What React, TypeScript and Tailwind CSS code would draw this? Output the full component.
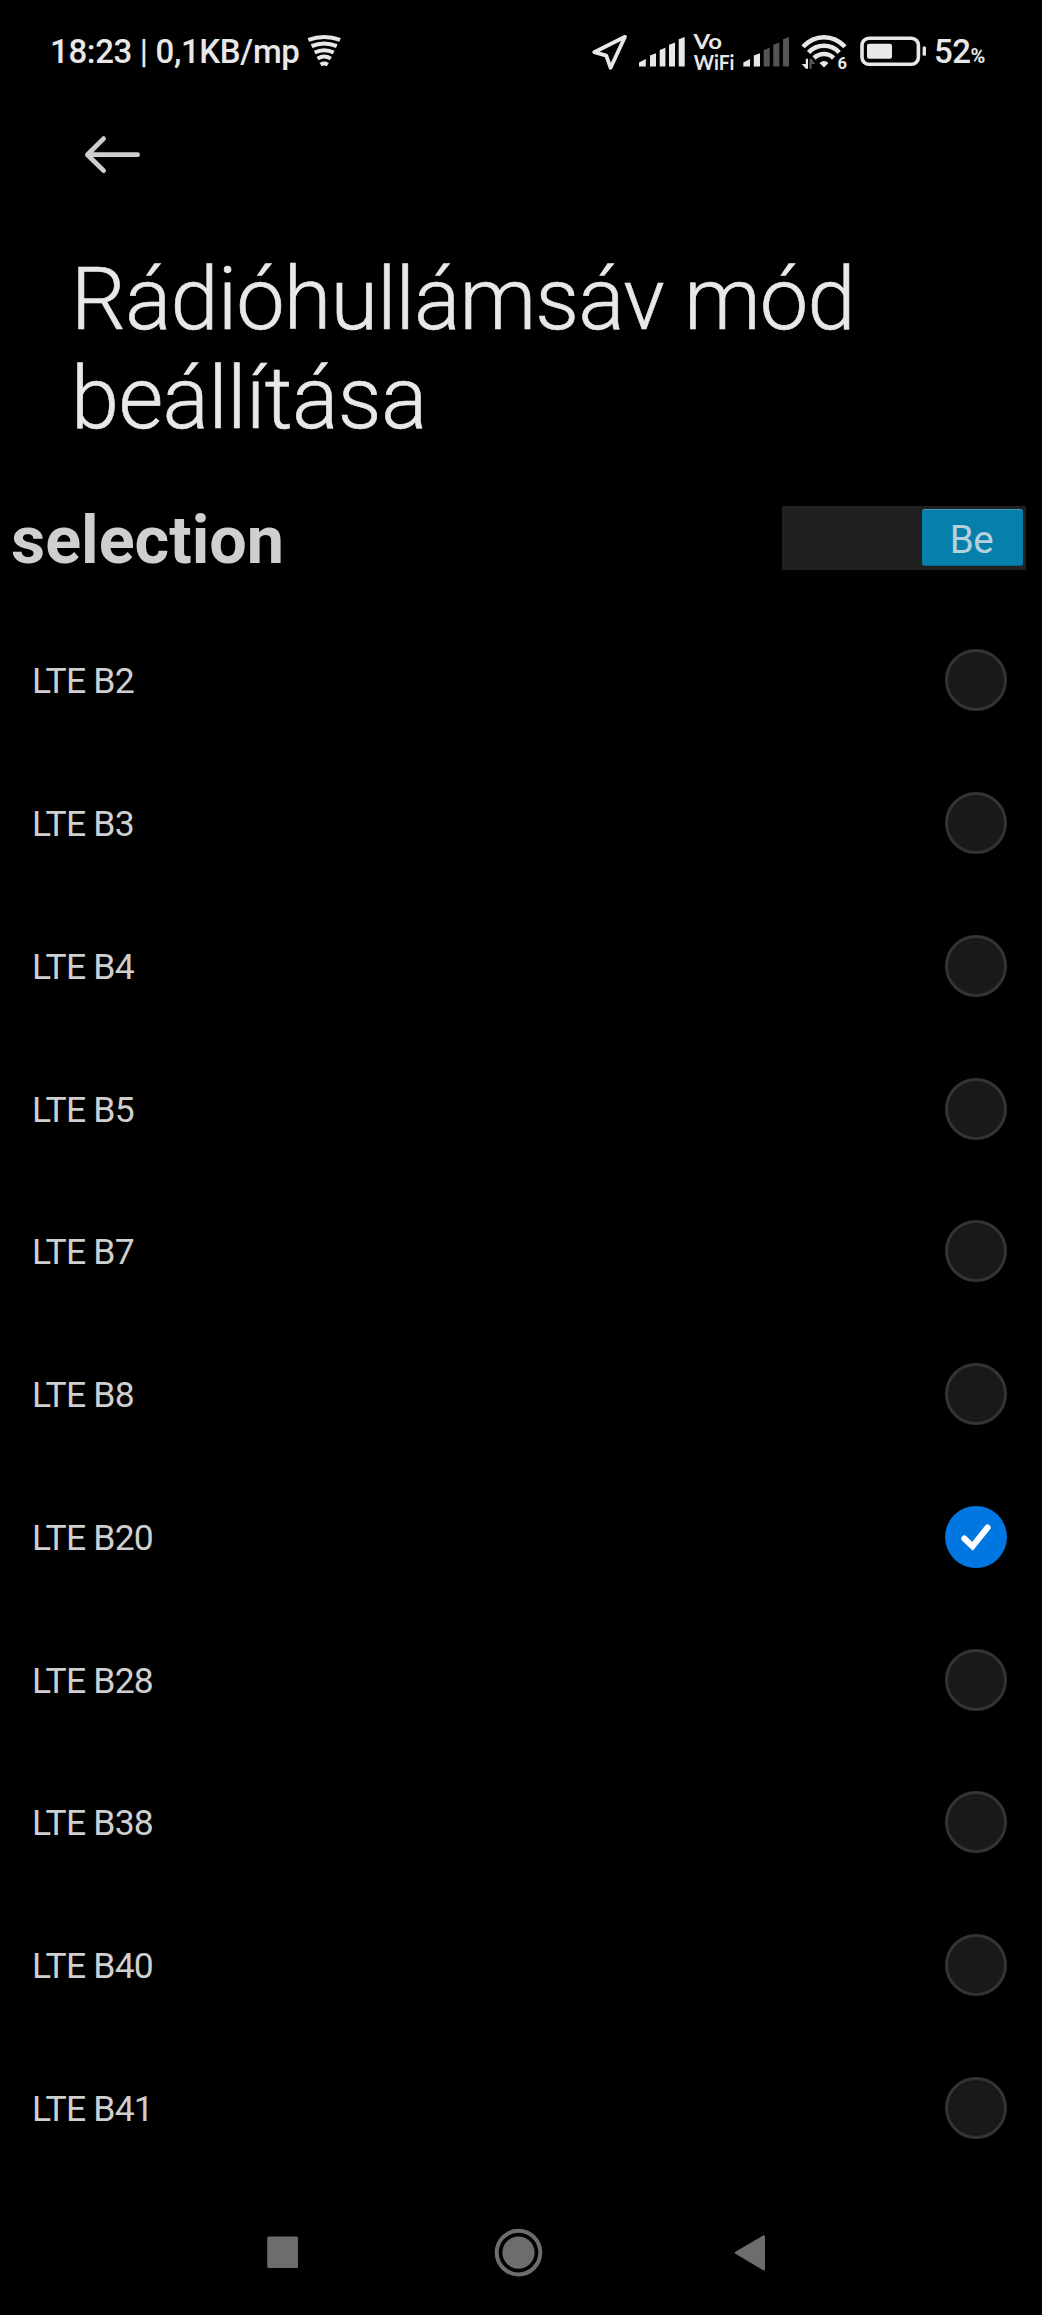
const bands = ['B2', 'B3', 'B4', 'B5', 'B7', 'B8', 'B20', 'B28', 'B38', 'B40', 'B41']

function StatusIcons() {
  return (
    <svg width="340" height="48" viewBox="590 26 340 48" fill="#e8e8e8">
      <path d="M625 35.8 594.2 51.2 606.3 54.6 610.6 66.8Z" fill="none" stroke="#e8e8e8" strokeWidth="3.8" strokeLinejoin="round" />

      {/* SIM 1 */}
      <path d="M639 61.5 645.8 58V65.4H639Z" />
      <path d="M650 54.5 656 52.2V65.4H650Z" />
      <path d="M659.7 49 665.4 46.7V65.4H659.7Z" />
      <path d="M669 43.8 675 41.5V65.4H669Z" />
      <path d="M678.7 38.2 684.7 36V65.4H678.7Z" />

      <text x="693.5" y="47.6" fontFamily="Lato" fontSize="21.5" fontWeight="700" textLength="28.5" lengthAdjust="spacingAndGlyphs">Vo</text>
      <text x="693.8" y="68.6" fontFamily="Lato" fontSize="21" fontWeight="700" textLength="40.7" lengthAdjust="spacingAndGlyphs">WiFi</text>

      {/* SIM 2 */}
      <path d="M743.3 61.5 750 58V65.4H743.3Z" />
      <path d="M753.8 54.5 760 52.2V65.4H753.8Z" />
      <g fill="#555">
        <path d="M763.7 49 769.7 46.7V65.4H763.7Z" />
        <path d="M773.3 43.8 779.3 41.5V65.4H773.3Z" />
        <path d="M783 38.2 789 36V65.4H783Z" />
      </g>

      {/* wifi */}
      <g fill="none" stroke="#e8e8e8" strokeWidth="4.6">
        <path d="M803 45.8Q812 36.2 824 36.2T845 45.8" />
        <path d="M808.6 51.5Q815 44.8 824 44.8T839.2 51.5" />
        <path d="M814 57Q818.4 53 824 53T833.6 57" />
      </g>
      <path d="M819.5 62Q824 57.8 828.5 62L824 66.5Z" />
      <path d="M805.8 57.8H808V67.8H805.8L801.8 63H805.8Z" />
      <path d="M809.4 57.8H811.6L815.2 63H811.6V67.8H809.4Z" fill="#555" />
      <text x="837.6" y="68" fontFamily="Roboto" fontSize="16.5" fontWeight="700">6</text>

      {/* battery */}
      <rect x="862" y="37.2" width="56.4" height="26" rx="7" fill="none" stroke="#e8e8e8" strokeWidth="3.6" />
      <rect x="867" y="42.7" width="25" height="15" rx="2" />
      <rect x="922.6" y="45.5" width="3.4" height="9.3" rx="1.2" />
    </svg>
  )
}

function SpeedIcon() {
  return (
    <svg width="34" height="34" viewBox="307 33 34 34" fill="none" stroke="#e8e8e8" strokeWidth="4">
      <path d="M308.3 38.8Q324.2 33.2 340.1 38.8" />
      <path d="M311.6 45.2Q324.2 39.8 336.8 45.2" />
      <path d="M314.7 51.5Q324.2 46.8 333.7 51.5" />
      <path d="M317.6 57.6Q324.2 53.4 330.8 57.6" />
      <path d="M320.6 63.6Q324.2 61.4 327.8 63.6" />
    </svg>
  )
}

function Radio({ checked }: { checked: boolean }) {
  if (!checked) {
    return <span className="size-[62px] rounded-full border-[3px] border-[#333] bg-[#191919]" />
  }
  return (
    <span className="flex size-[62px] items-center justify-center rounded-full bg-[#0076e1]">
      <svg width="62" height="62" viewBox="0 0 62 62" fill="none" stroke="#fff" strokeWidth="6" strokeLinecap="round" strokeLinejoin="miter">
        <path d="M19.3 32.5 27.5 40.3 42.6 21.5" />
      </svg>
    </span>
  )
}

export default function App() {
  return (
    <main className="flex h-[2315px] w-[1042px] flex-col overflow-hidden bg-black font-['Roboto',sans-serif] text-[#cfcfcf]">
      <header className="flex h-[102px] items-center pl-[50px] text-[33px] font-medium text-[#e8e8e8]">
        <span className="w-[257px] pt-[2px] whitespace-nowrap tracking-[-0.35px]">18:23 | 0,1KB/mp</span>
        <SpeedIcon />
        <span className="ml-[249px] mr-[4px]">
          <StatusIcons />
        </span>
        <span className="pt-[2px] whitespace-nowrap tracking-[-0.5px]">
          52<span className="text-[20px] font-bold">%</span>
        </span>
      </header>

      <button className="ml-[82px] mt-[30px] w-[62px]" aria-label="Vissza">
        <svg width="62" height="46" viewBox="82 132 62 46" fill="none" stroke="#cfcdcd" strokeWidth="4.8" strokeLinecap="round" strokeLinejoin="round">
          <path d="M137.6 154.7H87.6M103.6 138.6 87.4 154.7 103.6 170.6" />
        </svg>
      </button>

      <h1 className="mt-[72px] pl-[71px] text-[86.5px] leading-[99px] font-light tracking-[-0.9px] text-[#e8e8e8] [-webkit-text-stroke:0.6px_#e8e8e8]">
        Rádióhullámsáv mód
        <br />
        <span className="tracking-[-0.6px]">beállítása</span>
      </h1>

      <section className="mt-[58px] flex h-[64px] items-start justify-between pl-[11px] pr-[16px]">
        <h2 className="text-[66.5px] leading-[68px] font-bold">selection</h2>
        <div className="flex h-[64px] w-[244px] justify-end bg-[#202020] p-[3px]">
          <span className="flex h-[57px] w-[101px] items-center justify-center rounded-[3px] border-t border-b border-t-[#3f9abb] border-b-[#056a8b] bg-[#0680aa] pt-[4px] pr-[2px] text-[38.5px] tracking-[-0.5px] text-[#b5d0da]">
            Be
          </span>
        </div>
      </section>

      <ul className="mt-[39px]">
        {bands.map((band) => (
          <li key={band} className="flex h-[142.75px] items-center justify-between pl-[32px] pr-[35px] text-[35.5px]">
            <span className="mt-[3px] tracking-[-0.8px]">LTE {band}</span>
            <Radio checked={band === 'B20'} />
          </li>
        ))}
      </ul>

      <nav className="mt-[43px] flex pl-[260px]">
        <svg width="520" height="60" viewBox="260 2222 520 60" fill="#6d6d6d">
          <rect x="267.2" y="2236.6" width="30.8" height="31.4" rx="1.5" />
          <circle cx="518.5" cy="2252.6" r="16.1" />
          <circle cx="518.5" cy="2252.6" r="21.8" fill="none" stroke="#6d6d6d" strokeWidth="4" />
          <path d="M736 2252.7 763.8 2236.5V2269.2Z" stroke="#6d6d6d" strokeWidth="2.4" strokeLinejoin="round" />
        </svg>
      </nav>
    </main>
  )
}
